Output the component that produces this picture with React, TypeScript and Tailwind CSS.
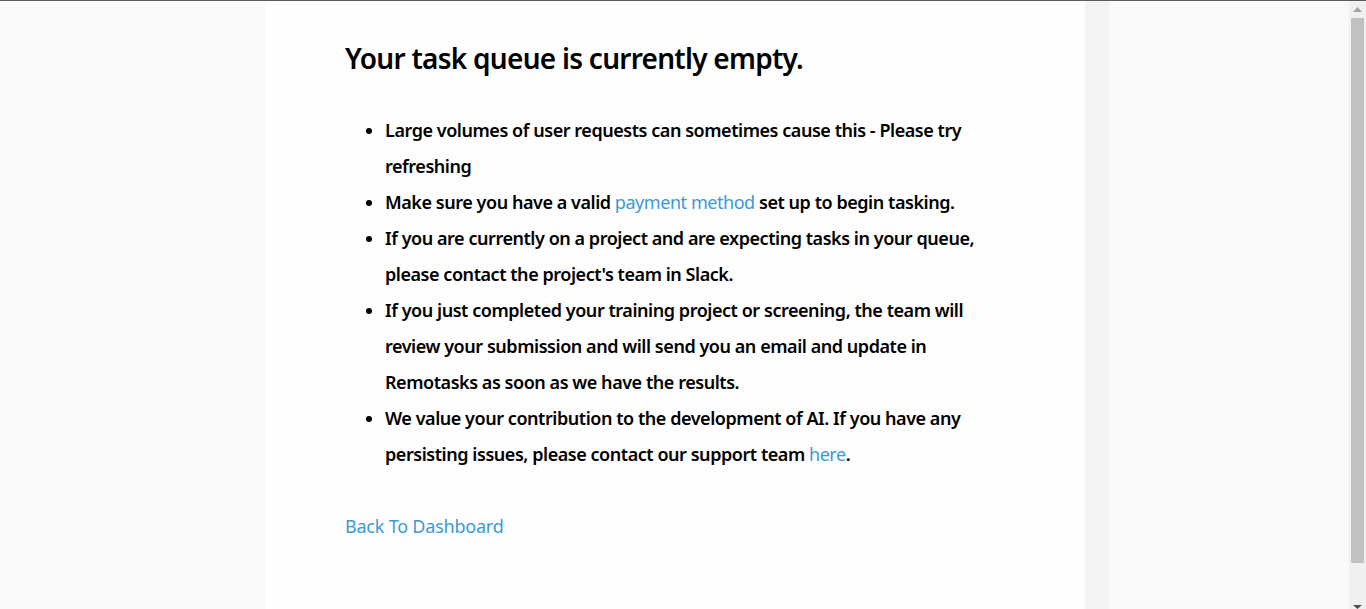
import React from "react";

export default function App() {
  const font = { fontFamily: '"Noto Sans", "Open Sans", sans-serif' };
  return (
    <div className="w-[1366px] h-[609px] overflow-hidden flex flex-col bg-[#f9f9f9]" style={font}>
      <div className="h-px bg-[#5b5b5b] w-full shrink-0" />
      <div className="flex flex-1 min-h-0">
        <div className="flex flex-1 min-w-0">
          <div className="w-[265px] bg-[#f9f9f9]" />
          <div className="w-[820px] bg-[#fefefe] pl-[80px] pr-[80px] pt-[35px]">
            <h1 className="text-[28px] leading-[44px] font-semibold text-black tracking-[-0.026em]">
              Your task queue is currently empty.
            </h1>
            <ul className="mt-[32px] pl-[40px] list-disc text-[18px] leading-[36px] font-semibold text-black tracking-[-0.025em]">
              <li>Large volumes of user requests can sometimes cause this - Please try refreshing</li>
              <li>
                Make sure you have a valid <a className="text-[#3b99d8] font-normal">payment method</a> set up to
                begin tasking.
              </li>
              <li>
                If you are currently on a project and are expecting tasks in your queue, please contact the
                project's team in Slack.
              </li>
              <li>
                If you just completed your training project or screening, the team will review your submission
                and will send you an email and update in Remotasks as soon as we have the results.
              </li>
              <li>
                We value your contribution to the development of AI. If you have any persisting issues, please
                contact our support team <a className="text-[#3b99d8] font-normal">here</a>.
              </li>
            </ul>
            <div className="mt-[40px] text-[18px] leading-[28px] text-[#3b99d8] tracking-[-0.012em]">
              Back To Dashboard
            </div>
          </div>
          <div className="w-[24px] bg-[#f3f3f3]" />
          <div className="flex-1 bg-[#f9f9f9]" />
        </div>
        <div className="w-[17px] bg-[#f0f0f0] flex flex-col items-center">
          <div className="h-[17px] flex items-center justify-center">
            <svg width="9" height="5" viewBox="0 0 9 5">
              <path d="M0 5 L4.5 0 L9 5 Z" fill="#a3a3a3" />
            </svg>
          </div>
          <div className="w-[13px] h-[545px] bg-[#c1c1c1]" />
          <div className="flex-1" />
          <div className="h-[4px] flex items-start justify-center">
            <svg width="9" height="4" viewBox="0 0 9 4">
              <path d="M0 0 L9 0 L4.5 4 Z" fill="#505050" />
            </svg>
          </div>
        </div>
      </div>
    </div>
  );
}
